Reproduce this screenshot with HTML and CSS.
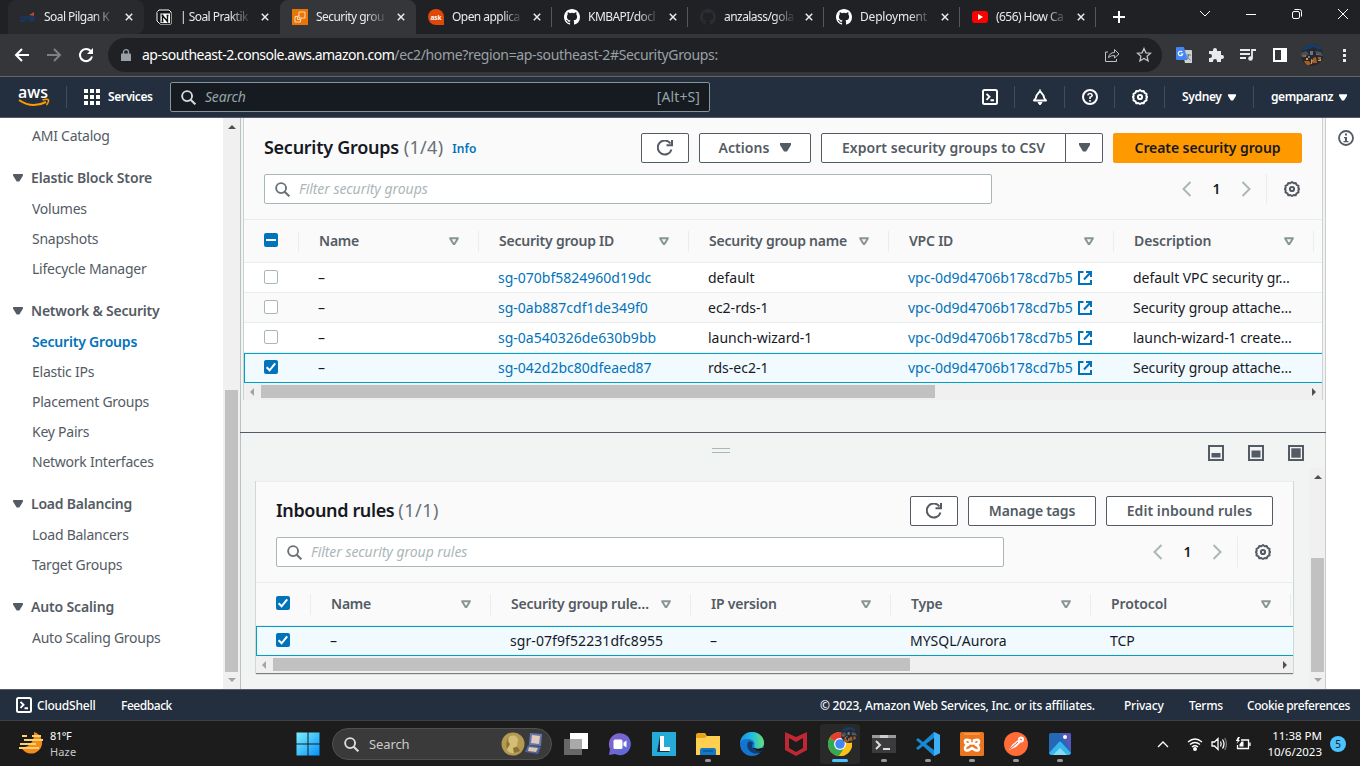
FILE: index.html
```html
<!DOCTYPE html>
<html lang="en">
<head>
<meta charset="utf-8">
<title>Security groups | EC2</title>
<link rel="stylesheet" href="styles.css">
</head>
<body>
<svg class="sprite" aria-hidden="true">
  <symbol id="close" viewBox="0 0 10 10"><path d="M1 1l8 8M9 1l-8 8" stroke="#e8eaed" stroke-width="1.9" fill="none"/></symbol>
  <symbol id="github" viewBox="0 0 16 16"><path d="M8 0C3.58 0 0 3.58 0 8c0 3.54 2.29 6.53 5.47 7.59.4.07.55-.17.55-.38v-1.49c-2.01.37-2.53-.49-2.69-.94-.09-.23-.48-.94-.82-1.13-.28-.15-.68-.52-.01-.53.63-.01 1.08.58 1.23.82.72 1.21 1.87.87 2.33.66.07-.52.28-.87.51-1.07-1.78-.2-3.64-.89-3.64-3.95 0-.87.31-1.59.82-2.15-.08-.2-.36-1.02.08-2.12 0 0 .67-.21 2.2.82a7.6 7.6 0 0 1 4 0c1.53-1.04 2.2-.82 2.2-.82.44 1.1.16 1.92.08 2.12.51.56.82 1.27.82 2.15 0 3.07-1.87 3.75-3.65 3.95.29.25.54.73.54 1.48v2.2c0 .21.15.46.55.38A8 8 0 0 0 16 8c0-4.42-3.58-8-8-8z" fill="currentColor"/></symbol>
  <symbol id="shell" viewBox="0 0 16 16"><rect x="1" y="1" width="14" height="14" rx="1.5" fill="none" stroke="currentColor" stroke-width="2"/><path d="M4.500 4.800l3 3-3 3M8.500 11.300h3.500" fill="none" stroke="currentColor" stroke-width="1.900"/></symbol>
  <symbol id="gear" viewBox="0 0 16 16"><path d="M8 1l1.700 1.200 2-.2.900 1.900 1.900.9-.2 2L15.200 8l-.9 1.400.2 2-1.900.9-.9 1.900-2-.2L8 15l-1.700-1-2 .2-.9-1.900-1.900-.9.2-2L.8 8l.9-1.200-.2-2 1.900-.9.9-1.900 2 .2z" fill="none" stroke="currentColor" stroke-width="2" stroke-linejoin="round"/><circle cx="8" cy="8" r="2.100" fill="none" stroke="currentColor" stroke-width="2"/></symbol>
  <symbol id="search" viewBox="0 0 16 16"><circle cx="6.500" cy="6.500" r="5.300" fill="none" stroke="currentColor" stroke-width="2"/><path d="M10.300 10.300l5 5" stroke="currentColor" stroke-width="2.200"/></symbol>
  <symbol id="down" viewBox="0 0 11 9"><path d="M0 0h11v2L7 8.500H4L0 2z" fill="currentColor"/></symbol>
  <symbol id="sort" viewBox="0 0 10 9"><path d="M1.300 1.200h7.400v.6L5.400 7h-.8L1.300 1.800z" fill="none" stroke="currentColor" stroke-width="2"/></symbol>
  <symbol id="refresh" viewBox="0 0 16 16"><path d="M14.500 9.500A7 7 0 1 1 13.500 3.500" fill="none" stroke="currentColor" stroke-width="2"/><path d="M9.500 5.200H15V0" fill="none" stroke="currentColor" stroke-width="2"/></symbol>
  <symbol id="external" viewBox="0 0 14 14"><path d="M5.500 1H1v12h12V9M8 1h5v5M13 1L6 8.500" fill="none" stroke="currentColor" stroke-width="2"/></symbol>
  <symbol id="left" viewBox="0 0 10 16"><path d="M8.500 1L1.500 8l7 7" fill="none" stroke="currentColor" stroke-width="2"/></symbol>
  <symbol id="right" viewBox="0 0 10 16"><path d="M1.500 1l7 7-7 7" fill="none" stroke="currentColor" stroke-width="2"/></symbol>
  <symbol id="check" viewBox="0 0 14 14"><path d="M2.600 7.200l3 3.100 5.600-7" fill="none" stroke="#fff" stroke-width="2"/></symbol>
  <symbol id="photo" viewBox="0 0 22 22"><clipPath id="round"><circle cx="11" cy="11" r="11"/></clipPath><g clip-path="url(#round)"><path d="M0 0h22v22H0z" fill="#26282d"/><path d="M0 0h22v5l-5 1-4-3-5 2-8 2z" fill="#173d66"/><path d="M0 9l5-2 3 3-4 3H0z" fill="#4b4f55"/><path d="M14 7l6 1 2 4-6-1z" fill="#47566a"/><path d="M2 11h3v2H2zM15 10h3v1h-3zM17 13h3v2h-3z" fill="#916641"/><path d="M3 17h5l2 3-4 2zM12 14l3-1 1 6h-4z" fill="#a75d24"/><path d="M9 7h3v4H9zM7 12h2v2H7z" fill="#687788"/><path d="M10 15l2 1-1 4h-1zM17 16l3-1v2h-3zM5 14h2v2H5z" fill="#d29650"/></g></symbol>
</svg>

<header class="tabs">
  <div class="tab hovered"><svg class="fav" viewBox="0 0 16 16"><path d="M1 8h3v4H1V8m3 0v5M6 12V8h3v4m1-2h4V8h-3v4h3" fill="none" stroke="#193a66" stroke-width="1.300"/><path d="M9 6l5-3v4z" fill="#b34b32"/></svg><span>Soal Pilgan K</span><svg class="x"><use href="#close"/></svg></div>
  <div class="tab"><svg class="fav" viewBox="0 0 16 16"><path d="M1 3l2-2h10l2 2v12H4l-3-3z" fill="#111" stroke="#fff"/><path d="M4 4h10.500v10.500H4zM1 3l3 1" fill="#fff" stroke="#222"/><path d="M6.500 12.500V6.500l5 6V6.500M5.500 6.500h2m3 0h2M5.500 12.500h2" fill="none" stroke="#111" stroke-width="1.400"/></svg><span>| Soal Praktik</span><svg class="x"><use href="#close"/></svg></div>
  <div class="tab active"><svg class="fav" viewBox="0 0 16 16"><path d="M0 0h16v16H0z" fill="#e87508"/><path d="M7 3h6v6H7zM9 9v1.500H5.500V7H7M5 7.500H3V13h5.500v-2" fill="none" stroke="#ffd9ae"/></svg><span>Security grou</span><svg class="x"><use href="#close"/></svg></div>
  <div class="tab sep"><svg class="fav" viewBox="0 0 16 16"><path d="M8 0a8 8 0 0 1 8 8v8H8A8 8 0 0 1 8 0" fill="#df4807"/><text x="8" y="10.500" text-anchor="middle" class="ask">ask</text></svg><span>Open applica</span><svg class="x"><use href="#close"/></svg></div>
  <div class="tab sep"><svg class="fav white"><use href="#github"/></svg><span>KMBAPI/docl</span><svg class="x"><use href="#close"/></svg></div>
  <div class="tab sep"><svg class="fav dim"><use href="#github"/></svg><span>anzalass/gola</span><svg class="x"><use href="#close"/></svg></div>
  <div class="tab sep"><svg class="fav white"><use href="#github"/></svg><span class="deploy">Deployment</span><svg class="x"><use href="#close"/></svg></div>
  <div class="tab sep"><svg class="fav" viewBox="0 0 16 16"><rect y="2" width="16" height="12" rx="3" fill="#f00"/><path d="M6 5l5 3-5 3z" fill="#fff"/></svg><span>(656) How Ca</span><svg class="x"><use href="#close"/></svg></div>
  <svg class="plus" viewBox="0 0 12 12"><path d="M6 0v12M0 6h12" stroke="#fff" stroke-width="2"/></svg>
  <div class="window-controls">
    <svg viewBox="0 0 12 12"><path d="M1 3l5 5 5-5" /></svg>
    <svg viewBox="0 0 12 12"><path d="M1 6.500h10"/></svg>
    <svg viewBox="0 0 12 12"><rect x="1.500" y="3.500" width="7" height="7" rx="1.500"/><path d="M3.500 1.500h5a2 2 0 0 1 2 2v5"/></svg>
    <svg viewBox="0 0 12 12"><path d="M1 1l10 10M11 1L1 11"/></svg>
  </div>
</header>

<div class="toolbar">
  <svg class="nav" viewBox="0 0 16 16"><path d="M15 8H2M8 2L2 8l6 6" stroke="#fff"/></svg>
  <svg class="nav" viewBox="0 0 16 16"><path d="M1 8h13M8 2l6 6-6 6" stroke="#7e8083"/></svg>
  <svg class="nav" viewBox="0 0 16 16"><path d="M14 9.500A6.100 6.100 0 1 1 12.700 4" stroke="#fff"/><path d="M15 1v6H9z" fill="#fff"/></svg>
  <div class="omnibox">
    <svg class="lock" viewBox="0 0 10 12"><path d="M1 4.500h8a1 1 0 0 1 1 1V12H0V5.500a1 1 0 0 1 1-1" fill="#9aa0a6"/><path d="M2.500 5V3a2.500 2.300 0 0 1 5 0v2" fill="none" stroke="#9aa0a6" stroke-width="1.300"/></svg>
    <span class="url"><b>ap-southeast-2.console.aws.amazon.com</b><i>/ec2/home?region=ap-southeast-2#SecurityGroups:</i></span>
    <svg class="line-icon" viewBox="0 0 16 16"><path d="M4 5H1.500v9.500h11V12M4.500 10.500Q5.500 5.500 10.500 5.500V2.500L15 7l-4.500 4V8.500Q7 8.300 4.500 10.500z"/></svg>
    <svg class="line-icon star" viewBox="0 0 16 16"><path d="M8 1.500l1.900 4.300 4.700.4-3.500 3.100 1 4.600L8 11.500l-4.100 2.400 1-4.600L1.400 6.200l4.700-.4z"/></svg>
  </div>
  <div class="extensions">
    <svg viewBox="0 0 16 16"><path d="M6 3h9a1 1 0 0 1 1 1v12H9z" fill="#d0d0d0"/><path d="M10 8h5m-2.500-1v1q0 3-2.500 5m.5-4q2 3 4 4" fill="none" stroke="#667d91"/><path d="M1 0h7l3.500 13H1a1 1 0 0 1-1-1V1a1 1 0 0 1 1-1" fill="#4285f4"/><path d="M6.200 5A2.200 2.200 0 1 0 6.700 7H4.700" fill="none" stroke="#fff" stroke-width="1.200"/></svg>
    <svg viewBox="0 0 16 16"><path d="M1 4h4V3a2 2 0 1 1 4 0v1h4v4h1a2 2 0 1 1 0 4h-1v3H9v-1a2 2 0 0 0-4 0v1H1v-4h1a2 2 0 0 0 0-4H1z" fill="#e8eaed"/></svg>
    <svg viewBox="0 0 16 16"><path d="M0 3h10M0 7h10M0 11h6M12 2v9M12 3h4" stroke="#e8eaed" stroke-width="1.800"/><circle cx="10.500" cy="11.500" r="2.300" fill="#e8eaed"/></svg>
    <svg viewBox="0 0 16 16"><path d="M1 1h14v14H1zM3 3v10h6V3z" fill="#fff" fill-rule="evenodd"/></svg>
    <svg class="avatar"><use href="#photo"/></svg>
    <svg viewBox="0 0 16 16"><path d="M7 2h3v3H7zM7 7h3v3H7zM7 12h3v3H7z" fill="#e8eaed"/></svg>
  </div>
</div>

<nav class="aws">
  <svg class="logo" viewBox="0 0 32 22"><text x="0" y="11.500" textLength="30" lengthAdjust="spacingAndGlyphs">aws</text><path d="M1 14q13 9 27 2" fill="none" stroke="#ff9900" stroke-width="2"/><path d="M24.500 14q5-1.500 6 0 .5 2-2 5" fill="none" stroke="#ff9900" stroke-width="1.500"/></svg>
  <i class="rule first"></i>
  <svg class="grid-icon" viewBox="0 0 16 16"><path d="M0 0h4v4H0zM6 0h4v4H6zM12 0h4v4h-4zM0 6h4v4H0zM6 6h4v4H6zM12 6h4v4h-4zM0 12h4v4H0zM6 12h4v4H6zM12 12h4v4h-4z" fill="#fff"/></svg>
  <b class="services">Services</b>
  <div class="aws-search"><svg><use href="#search"/></svg><em>Search</em><span>[Alt+S]</span></div>
  <div class="aws-tools">
    <div><svg><use href="#shell"/></svg></div>
    <div><svg viewBox="0 0 16 16"><path d="M2 11.500Q4.500 9 4.500 6.500L8 2l3.500 4.500Q11.500 9 14 11.500z" fill="none" stroke="#fff" stroke-width="2" stroke-linejoin="round"/><path d="M8 0v3M6 13.500h4L8 16z" stroke="#fff" fill="#fff"/></svg></div>
    <div><svg viewBox="0 0 16 16"><circle cx="8" cy="8" r="7" fill="none" stroke="#fff" stroke-width="2"/><path d="M5.800 6.300Q6 4.500 8 4.500t2.200 1.800Q10.200 7.500 8 8.300V10M8 11v1.700" fill="none" stroke="#fff" stroke-width="1.600"/></svg></div>
    <div><svg><use href="#gear"/></svg></div>
    <b class="region">Sydney <svg><use href="#down"/></svg></b>
    <b class="user">gemparanz <svg><use href="#down"/></svg></b>
  </div>
</nav>

<main class="console">
  <aside class="side">
    <a>AMI Catalog</a>
    <h3><svg><use href="#down"/></svg>Elastic Block Store</h3>
    <a>Volumes</a><a>Snapshots</a><a>Lifecycle Manager</a>
    <h3><svg><use href="#down"/></svg>Network &amp; Security</h3>
    <a class="current">Security Groups</a><a>Elastic IPs</a><a>Placement Groups</a><a>Key Pairs</a><a>Network Interfaces</a>
    <h3><svg><use href="#down"/></svg>Load Balancing</h3>
    <a>Load Balancers</a><a>Target Groups</a>
    <h3><svg><use href="#down"/></svg>Auto Scaling</h3>
    <a>Auto Scaling Groups</a>
  </aside>
  <div class="vbar side-bar"><i class="up"></i><span></span><i class="dn"></i></div>

  <section class="content">
    <div class="upper">
      <div class="card groups">
        <div class="title-row">
          <h1>Security Groups</h1><span class="count">(1/4)</span><b class="info">Info</b>
          <div class="buttons">
            <button class="btn icon"><svg><use href="#refresh"/></svg></button>
            <button class="btn actions">Actions <svg><use href="#down"/></svg></button>
            <div class="split"><button class="btn export">Export security groups to CSV</button><button class="btn more"><svg><use href="#down"/></svg></button></div>
            <button class="btn primary">Create security group</button>
          </div>
        </div>
        <div class="filter-row">
          <div class="filter"><svg><use href="#search"/></svg><em>Filter security groups</em></div>
          <div class="pager"><svg><use href="#left"/></svg><b>1</b><svg><use href="#right"/></svg><svg class="settings"><use href="#gear"/></svg></div>
        </div>
        <div class="row head">
          <div><i class="box on"><u></u></i></div><div>Name<svg><use href="#sort"/></svg></div><div>Security group ID<svg><use href="#sort"/></svg></div><div>Security group name<svg><use href="#sort"/></svg></div><div>VPC ID<svg><use href="#sort"/></svg></div><div>Description<svg><use href="#sort"/></svg></div><div></div>
        </div>
        <div class="row"><div><i class="box"></i></div><div>–</div><div class="link">sg-070bf5824960d19dc</div><div>default</div><div class="link">vpc-0d9d4706b178cd7b5<svg><use href="#external"/></svg></div><div>default VPC security gr…</div></div>
        <div class="row alt"><div><i class="box"></i></div><div>–</div><div class="link">sg-0ab887cdf1de349f0</div><div>ec2-rds-1</div><div class="link">vpc-0d9d4706b178cd7b5<svg><use href="#external"/></svg></div><div>Security group attache…</div></div>
        <div class="row"><div><i class="box"></i></div><div>–</div><div class="link">sg-0a540326de630b9bb</div><div>launch-wizard-1</div><div class="link">vpc-0d9d4706b178cd7b5<svg><use href="#external"/></svg></div><div>launch-wizard-1 create…</div></div>
        <div class="row selected"><div><i class="box on"><svg><use href="#check"/></svg></i></div><div>–</div><div class="link">sg-042d2bc80dfeaed87</div><div>rds-ec2-1</div><div class="link">vpc-0d9d4706b178cd7b5<svg><use href="#external"/></svg></div><div>Security group attache…</div></div>
        <div class="hbar"><i class="lt"></i><span></span><i class="rt"></i></div>
      </div>
    </div>
    <div class="lower">
      <div class="splitter">
        <i class="handle"></i>
        <div class="sizes">
          <svg viewBox="0 0 16 16"><path d="M1 1h14v14H1z"/><path class="fill" d="M3.500 8h9v4.500h-9z"/></svg>
          <svg viewBox="0 0 16 16"><path d="M1 1h14v14H1z"/><path class="fill" d="M3.500 5.500h9v7h-9z"/></svg>
          <svg viewBox="0 0 16 16"><path d="M1 1h14v14H1z"/><path class="fill" d="M3.300 3.300h9.400v9.400H3.300z"/></svg>
        </div>
      </div>
      <div class="lower-body">
        <div class="card rules">
          <div class="title-row">
            <h1>Inbound rules</h1><span class="count">(1/1)</span>
            <div class="buttons">
              <button class="btn icon"><svg><use href="#refresh"/></svg></button>
              <button class="btn tags">Manage tags</button>
              <button class="btn edit">Edit inbound rules</button>
            </div>
          </div>
          <div class="filter-row">
            <div class="filter"><svg><use href="#search"/></svg><em>Filter security group rules</em></div>
            <div class="pager"><svg><use href="#left"/></svg><b>1</b><svg><use href="#right"/></svg><svg class="settings"><use href="#gear"/></svg></div>
          </div>
          <div class="row head">
            <div><i class="box on"><svg><use href="#check"/></svg></i></div><div>Name<svg><use href="#sort"/></svg></div><div>Security group rule…<svg><use href="#sort"/></svg></div><div>IP version<svg><use href="#sort"/></svg></div><div>Type<svg><use href="#sort"/></svg></div><div>Protocol<svg><use href="#sort"/></svg></div><div></div>
          </div>
          <div class="row selected"><div><i class="box on"><svg><use href="#check"/></svg></i></div><div>–</div><div class="rule-id">sgr-07f9f52231dfc8955</div><div>–</div><div>MYSQL/Aurora</div><div>TCP</div></div>
          <div class="hbar"><i class="lt"></i><span></span><i class="rt"></i></div>
        </div>
        <div class="vbar rules-bar"><i class="up"></i><span></span><i class="dn"></i></div>
      </div>
    </div>
  </section>
  <aside class="help"><svg viewBox="0 0 16 16"><circle cx="8" cy="8" r="7" fill="none" stroke="#545b64" stroke-width="1.800"/><path d="M7 3.500h2v2H7zM6 7h3v4h1.500v1.300h-5V11H7V8.300H6z" fill="#545b64"/></svg></aside>
</main>

<footer class="aws-footer">
  <svg><use href="#shell"/></svg><span class="f1">CloudShell</span><span class="f2">Feedback</span>
  <span class="f3">© 2023, Amazon Web Services, Inc. or its affiliates.</span><span class="f4">Privacy</span><span class="f5">Terms</span><span class="f6">Cookie preferences</span>
</footer>

<div class="taskbar">
  <div class="weather">
    <svg viewBox="0 0 24 24"><path d="M15 1a11 11 0 1 1-13 15c8 1 14-6 13-15" fill="#f28c1e"/><path d="M3 5h5M13 5h9M5 9h19M1 13h16M0 17h20" stroke="#fbd36a" stroke-width="1.800"/></svg>
    <p><b>81°F</b><span>Haze</span></p>
  </div>
  <div class="apps">
    <div class="app"><svg viewBox="0 0 24 24"><defs><linearGradient id="win" x2="1" y2="1"><stop stop-color="#7cf0ff"/><stop offset="1" stop-color="#0592fb"/></linearGradient></defs><path d="M.5.500h11v11H.5zM12.500.500h11v11h-11zM.5 12.500h11v11H.5zM12.500 12.500h11v11h-11z" fill="url(#win)"/></svg></div>
    <div class="win-search"><svg class="glass"><use href="#search"/></svg><span>Search</span>
      <svg class="doodle" viewBox="0 0 42 24"><circle cx="12" cy="12" r="11.500" fill="#b49a51"/><path d="M9 4q7-2 8 4l-1 6-4 2 2 5q-8 1-8-5l3-4q-3-5 0-8" fill="#d3bd78"/><path d="M8 5q-3 5 1 7l-3 5q-2-8 2-12M16 15q2 1 3 4l-6 2-1-5" fill="#8b712f"/><path d="M29 1l12 1-1 12-12-1z" fill="#6278ae"/><path d="M31 3l8 1-1 8-8-1z" fill="#e2c9bd"/><path d="M27 13l13 2-3 7-13-2z" fill="#4e64a0"/><path d="M28 15l9 1-2 4-8-1z" fill="#dfc7a9"/></svg></div>
    <div class="app"><svg viewBox="0 0 24 24"><path d="M6 1h18v16H6z" fill="#fff"/><path d="M0 7h18v16H0z" fill="#686868"/><path d="M6 7h12v10H6z" fill="#aaa"/></svg></div>
    <div class="app"><svg viewBox="0 0 24 24"><defs><linearGradient id="meet" x2="1" y2="1"><stop stop-color="#8d62c9"/><stop offset="1" stop-color="#546bdd"/></linearGradient></defs><path d="M1 23l1-6A11 11 0 1 1 7 22z" fill="url(#meet)"/><rect x="5.500" y="7.500" width="9" height="9.500" rx="1.500" fill="#fff"/><path d="M15.500 10.500l3-2v7l-3-2z" fill="#fff"/></svg></div>
    <div class="app"><svg viewBox="0 0 24 24"><path d="M0 0h24v24H0z" fill="#25abd8"/><path d="M8 4L5 20h13l-7-5z" fill="#142d4e"/><path d="M8 4h4v11h6v4H8z" fill="#fff"/></svg></div>
    <div class="app open"><svg viewBox="0 0 24 24"><path d="M0 3q0-2 2-2h7l2 3h13v18H0z" fill="#e8a317"/><path d="M0 6h9l2-2h13v19H0z" fill="#ffd04f"/><path d="M4 23v-5q0-2 2-2h12q2 0 2 2v5z" fill="#1479c5"/><path d="M7 19h10" stroke="#075a9d" stroke-width="1.500"/></svg></div>
    <div class="app"><svg viewBox="0 0 24 24"><defs><linearGradient id="edge" x2="1"><stop stop-color="#168fe3"/><stop offset=".5" stop-color="#20bde0"/><stop offset="1" stop-color="#68df72"/></linearGradient></defs><circle cx="12" cy="12" r="12" fill="#1375cb"/><path d="M12 16h12v3l-3 3z" fill="#1c1c1c"/><path d="M0 11C1 3 7 0 12 0c8 0 12 6 12 11 0 7-10 7-10 3 2-3-1-7-6-7Q2 7 0 11" fill="url(#edge)"/><path d="M8 10c-3 8 4 13 11 11q3-1 4-3-3 2-6 1c-5-1-6-5-4-8q-3-3-5-1" fill="#103d73"/></svg></div>
    <div class="app"><svg viewBox="0 0 24 24"><path d="M1 0l11 5 11-5v18l-11 6-11-6zM5 6v10l7 4 7-4V6l-7 4z" fill="#bf2833" fill-rule="evenodd"/></svg></div>
    <div class="app focused"><svg viewBox="0 0 24 24"><circle cx="12" cy="12" r="12" fill="#fbc116"/><path d="M12 12H24A12 12 0 0 0 1.600 6z" fill="#e43e30"/><path d="M12 12L1.600 6A12 12 0 0 0 11 24l6-9z" fill="#34a853"/><path d="M12 12v-5h11A12 12 0 0 1 11 24l6-9z" fill="#fbc116"/><circle cx="12" cy="12" r="6" fill="#fff"/><circle cx="12" cy="12" r="4.800" fill="#4285f4"/></svg><svg class="mini" viewBox="0 0 22 22"><use href="#photo" width="22" height="22"/></svg></div>
    <div class="app open"><svg viewBox="0 0 24 24"><rect y="3" width="24" height="18" rx="1" fill="#3b3b3d"/><path d="M0 3h24v3H0z" fill="#9b9b9b"/><path d="M8 3h8v3H8z" fill="#ccc"/><path d="M4 9l4 4-4 4M11 17h7" stroke="#ddd" stroke-width="2" fill="none"/></svg></div>
    <div class="app open"><svg viewBox="0 0 24 24"><path d="M18 0l6 3v18l-6 3L7 14l-5 4-2-2 5-4-5-4 2-2 5 4z" fill="#168ad4"/><path d="M18 6v12l-8-6z" fill="#1c1c1c"/><path d="M18 0l6 3v18l-6 3z" fill="#3bb0f4"/></svg></div>
    <div class="app open"><svg viewBox="0 0 24 24"><rect width="24" height="24" rx="1.500" fill="#ea7621"/><path d="M4 2h16" stroke="#ffb15f"/><path d="M10 8.500q-5-2-5 1t4 3q-4 1-4 4t4 1.500l3-2 3 2q4 1.500 4-1.500t-4-4q4 0 4-3t-5-1v3h-4z" fill="none" stroke="#fff" stroke-width="2.600"/></svg></div>
    <div class="app open"><svg viewBox="0 0 24 24"><circle cx="12" cy="12" r="12" fill="#ff6c37"/><path d="M5 18l3-5 6-5 3 2-5 5z" fill="#fff"/><circle cx="17" cy="7.500" r="3" fill="#fff"/><path d="M6 17l8-7M16 7l2 1" stroke="#df5a2d"/></svg></div>
    <div class="app open"><svg viewBox="0 0 24 24"><rect x="1" y="1" width="22" height="22" rx="2" fill="#2568b7"/><path d="M12 1h9q2 0 2 2v16z" fill="#5458bb"/><path d="M1 21L11 10q1-1 2 0l10 11-2 2H3z" fill="#35b7eb"/><path d="M5 23l7-7 7 7z" fill="#83dcf5"/><circle cx="17" cy="5" r="2" fill="#fff"/></svg></div>
  </div>
  <div class="tray">
    <svg class="chev" viewBox="0 0 12 12"><path d="M1 9l5-5 5 5"/></svg>
    <svg viewBox="0 0 16 16"><path d="M1 6q7-6 14 0M3 8.500q5-4 10 0M5 11q3-2.500 6 0"/><circle cx="8" cy="13" r="1.300" fill="#fff"/></svg>
    <svg class="speaker" viewBox="0 0 16 16"><path d="M1 6h2.500L7 2.500v11L3.500 10H1zM9.500 5.500q1.500 2.500 0 5M11.500 3.500q3 4.500 0 9"/><path d="M13.700 2q3.500 6 0 12" opacity=".4"/></svg>
    <svg class="battery" viewBox="0 0 16 16"><path d="M6 4h7.500v8.500h-11V9M15 6.500v3.500"/><path d="M3 1L.8 5h2L1.500 8 5 4H3.500L5 1z" fill="#fff" stroke="none"/><path d="M4.500 10.500v-2l2-3h2v5z" fill="#fff" stroke="none"/></svg>
    <p class="clock">11:38 PM<br>10/6/2023</p>
    <b class="badge">5</b>
  </div>
</div>
</body>
</html>
```
FILE: styles.css
```css
* { box-sizing: border-box; }
body { margin: 0; width: 1360px; height: 766px; overflow: hidden; display: flex; flex-direction: column; font: 14px/20px "Noto Sans", sans-serif; color: #16191f; background: #fff; }
svg { display: block; flex: none; width: 16px; height: 16px; }
i, u { display: block; font-style: normal; }
p { margin: 0; }
.sprite { position: absolute; width: 0; height: 0; }

/* Browser tabs */
.tabs { flex: none; height: 34px; padding-left: 8px; display: flex; align-items: center; background: #202124; color: #e8eaed; font: 12px/34px "Noto Sans", sans-serif; }
.tab { width: 136px; height: 34px; padding-left: 12px; display: flex; align-items: center; position: relative; }
.tab span { width: 73px; margin-left: 8px; white-space: nowrap; letter-spacing: -.55px; -webkit-mask-image: linear-gradient(90deg, #000 68%, transparent 98%); mask-image: linear-gradient(90deg, #000 68%, transparent 98%); }
.tab .deploy { letter-spacing: -.2px; }
.tab .x { width: 8px; height: 8px; margin-left: 8px; }
.hovered { background: #292a2d; border-radius: 8px 8px 8px 0; }
.active { background: #35363a; border-radius: 8px 8px 0 0; }
.sep::after { content: ""; position: absolute; right: 0; top: 7px; width: 1px; height: 20px; background: #55575b; }
.white { color: #fff; }
.dim { color: #292e33; }
.ask { font: bold 6.5px "Open Sans", sans-serif; fill: #fff; }
.plus { width: 12px; height: 12px; margin-left: 17px; }
.window-controls { display: flex; gap: 34px; margin: 0 11px 6px auto; }
.window-controls svg { width: 12px; height: 12px; fill: none; stroke: #fff; }

/* Browser toolbar */
.toolbar { flex: none; height: 43px; padding-left: 14px; display: flex; align-items: center; background: #35363a; border-bottom: 1px solid #63656b; }
.nav { margin-right: 16px; fill: none; stroke-width: 2; }
.omnibox { width: 1054px; height: 34px; margin-left: -2px; padding: 0 10px 0 13px; display: flex; align-items: center; border-radius: 17px; background: #202124; }
.lock { width: 10px; height: 12px; }
.url { margin-left: 11px; white-space: nowrap; color: #fff; }
.url b { font-weight: 400; letter-spacing: -.49px; }
.url i { display: inline; color: #9aa0a6; letter-spacing: -.35px; }
.line-icon { fill: none; stroke: #bec1c5; margin-left: auto; }
.line-icon.star { margin-left: 16px; stroke-width: 1.3; }
.extensions { display: flex; align-items: center; gap: 16px; margin-left: 14px; }
.extensions .avatar { width: 22px; height: 22px; margin: 0 -3px; }

/* Console navigation */
.aws { flex: none; height: 41px; padding-left: 18px; display: flex; align-items: center; background: #232f3e; border-bottom: 1px solid #545b64; color: #fff; font-size: 12px; }
.aws b { font-weight: 600; }
.logo { width: 32px; height: 22px; }
.logo text { font: 600 16px "Open Sans", sans-serif; fill: #fff; }
.rule { width: 1px; height: 22px; background: #414c59; }
.rule.first { margin: 0 17px 0 16px; }
.services { width: 62px; margin-left: 8px; letter-spacing: -.4px; }
.aws-search { width: 540px; height: 30px; padding: 0 9px 0 10px; display: flex; align-items: center; background: #161a21; border: 1px solid #879596; border-radius: 2px; font-size: 14px; color: #95a5a6; }
.aws-search svg { width: 15px; height: 15px; color: #d5dbdb; }
.aws-search em { margin-left: 9px; letter-spacing: -.2px; }
.aws-search span { margin-left: auto; letter-spacing: .1px; }
.aws-tools { display: flex; align-items: center; margin-left: 255px; height: 22px; }
.aws-tools div { width: 50px; height: 22px; display: flex; justify-content: center; align-items: center; border-right: 1px solid #414c59; }
.aws-tools b { display: flex; align-items: center; white-space: nowrap; height: 22px; }
.aws-tools b svg { width: 8px; height: 7px; }
.region { width: 89px; padding-left: 17px; gap: 6px; border-right: 1px solid #414c59; letter-spacing: -.35px; }
.user { padding-left: 17px; gap: 6px; letter-spacing: -.45px; }

/* Workspace */
.console { flex: none; height: 571px; display: flex; overflow: hidden; }
.side { width: 223px; padding-top: 3px; color: #545b64; }
.side a { display: block; height: 30px; line-height: 30px; padding-left: 32px; letter-spacing: -.25px; }
.side .current { color: #0073bb; font-weight: 600; letter-spacing: -.2px; }
.side h3 { margin: 0; height: 43px; padding: 11px 0 0 13px; display: flex; align-items: center; font-size: 14px; font-weight: 600; letter-spacing: -.15px; }
.side h3:nth-of-type(2), .side h3:nth-of-type(3) { letter-spacing: -.22px; }
.side h3 svg { width: 10px; height: 8px; margin-right: 8px; }
.vbar { width: 17px; background: #f0f0f0; display: flex; flex-direction: column; align-items: center; }
.vbar span { width: 13px; background: #c1c1c1; }
.up, .dn { border: 4px solid transparent; width: 8px; height: 4px; }
.up { border-top: 0; border-bottom-color: #505050; }
.dn { border-bottom: 0; border-top-color: #a3a3a3; }
.side-bar { padding-top: 7px; }
.side-bar span { height: 282px; margin: 261px 0 6px; }
.content { width: 1086px; border: 1px solid #ccc; border-width: 0 1px; border-left-color: #b9c2c2; background: #f2f3f3; }
.upper { height: 314px; padding: 0 2px; }
.card { background: #fafafa; }
.groups { border: 1px solid #ccd1d1; border-width: 0 1px; height: 282px; overflow: hidden; }
.title-row { display: flex; align-items: center; padding: 15px 20px 0; height: 45px; }
h1 { margin: 0 0 2px; font-size: 18px; font-weight: 600; line-height: 30px; letter-spacing: -.28px; }
.count { margin: 0 0 2px 5px; font-size: 18px; color: #687078; letter-spacing: .3px; }
.info { margin: 2px 0 0 9px; font-size: 12px; font-weight: 600; color: #0073bb; }
.buttons { display: flex; gap: 10px; margin-left: auto; }
.btn { height: 30px; padding: 0 0 1px; display: flex; justify-content: center; align-items: center; border: 1px solid #545b64; border-radius: 2px; background: #fff; color: #545b64; font: 600 14px "Noto Sans", sans-serif; white-space: nowrap; letter-spacing: .06px; }
.btn.icon { width: 48px; padding: 0; }
.actions { width: 112px; gap: 11px; }
.btn svg { width: 11px; height: 9px; }
.btn.icon svg { width: 16px; height: 16px; }
.split { display: flex; }
.export { width: 245px; border-radius: 2px 0 0 2px; }
.more { width: 38px; margin-left: -1px; border-radius: 0 2px 2px 0; }
.primary { width: 189px; background: #f90; border-color: #f90; color: #16191f; letter-spacing: -.08px; }
.tags { width: 128px; letter-spacing: -.2px; }
.edit { width: 167px; letter-spacing: .06px; }
.filter-row { display: flex; padding: 11px 20px 0; height: 57px; border-bottom: 1px solid #eaeded; }
.filter { width: 728px; height: 30px; padding-left: 10px; display: flex; align-items: center; background: #fff; border: 1px solid #aab7b8; border-radius: 2px; color: #aab7b8; }
.filter svg { width: 15px; height: 15px; margin-right: 9px; color: #687078; }
.filter em { letter-spacing: -.05px; }
.pager { display: flex; align-items: center; height: 30px; margin-left: auto; color: #aab7b8; }
.pager > svg { width: 10px; height: 16px; }
.pager b { width: 49px; text-align: center; color: #16191f; font-weight: 600; }
.pager .settings { box-sizing: content-box; width: 16px; height: 16px; padding: 7px 2px 7px 17px; margin-left: 15px; border-left: 1px solid #eaeded; color: #545b64; }
.row { width: 1270px; height: 30px; display: grid; grid-template-columns: 55px 180px 210px 200px 225px 200px 200px; align-items: center; background: #fff; border-bottom: 1px solid #eaeded; white-space: nowrap; }
.row > div { padding-left: 19px; display: flex; align-items: center; }
.row > div:first-child { padding-left: 20px; }
.row > div:nth-child(6) { letter-spacing: -.05px; }
.head { height: 43px; background: #fafafa; font-weight: 600; color: #545b64; letter-spacing: -.22px; }
.row.head > div:nth-child(6) { letter-spacing: -.1px; }
.head > div { height: 21px; padding: 0 20px; border-right: 1px solid #eaeded; }
.head > div svg { width: 10px; height: 9px; margin-left: auto; color: #879596; }
.head > div > svg { margin-right: -1px; }
.alt { background: #fafafa; }
.link { color: #0073bb; }
.link svg { width: 14px; height: 14px; margin-left: 5px; }
.rule-id { letter-spacing: .08px; }
.selected { width: auto; background: #f1faff; border: 1px solid #00a1c9; border-right: 0; overflow: hidden; }
.selected > div:first-child { margin-left: -1px; }
.selected > div:not(:first-child) { position: relative; left: -1px; }
.box { width: 14px; height: 14px; border: 1px solid #aab7b8; border-radius: 2px; background: #fff; margin-bottom: 2px; }
.box.on { border: 0; background: #0073bb; }
.box.on svg { width: 14px; height: 14px; margin: 0; color: #fff; }
.box u { width: 10px; height: 2px; margin: 6px 2px; background: #fff; }
.hbar { height: 17px; background: #f0f0f0; display: flex; align-items: center; padding: 0 6px; }
.hbar span { height: 13px; background: #c1c1c1; margin-left: 7px; }
.lt, .rt { border: 4px solid transparent; width: 4px; height: 8px; }
.lt { border-left: 0; border-right-color: #a3a3a3; }
.rt { border-right: 0; border-left-color: #505050; margin-left: auto; }
.groups .hbar span { width: 674px; }

/* Split panel */
.lower { border-top: 1px solid #545b64; height: 257px; margin: 0 -1px; padding: 0 1px; }
.splitter { height: 35px; position: relative; display: flex; justify-content: flex-end; padding: 12px 21px 0 0; }
.handle { position: absolute; left: 471px; top: 15px; width: 18px; height: 5px; border: solid #aab7b8; border-width: 1px 0; }
.sizes { display: flex; gap: 24px; }
.sizes svg { fill: none; stroke: #545b64; stroke-width: 2; }
.sizes .fill { fill: #545b64; stroke: none; }
.lower-body { height: 221px; display: flex; justify-content: space-between; padding-left: 15px; }
.rules { width: 1037px; height: 192px; margin-top: 13px; overflow: hidden; box-shadow: -1px 0 0 #d1d6d6, 1px 0 0 #d1d6d6, 0 1px 1px #777e80; border-top: 1px solid #eaeded; }
.rules .title-row { height: 44px; padding-top: 14px; }
.rules .count { margin-left: 4px; letter-spacing: .5px; }
.rules h1 { letter-spacing: -.38px; }
.rules .row { grid-template-columns: 55px 180px 200px 200px 200px 200px 200px; }
.rules .hbar span { width: 637px; }
.rules-bar { width: 16px; padding: 7px 0 0 1px; }
.rules-bar span { height: 114px; margin: 79px 0 6px; }
.help { width: 34px; padding: 12px 0 0 12px; }

/* Console footer */
.aws-footer { flex: none; height: 31px; padding-left: 16px; display: flex; align-items: center; background: #232f3e; border-top: 1px solid #545b64; color: #fff; font: 500 12px "Noto Sans", sans-serif; white-space: nowrap; }
.aws-footer span { letter-spacing: -.22px; }
.aws-footer .f1 { width: 84px; margin-left: 5px; }
.aws-footer .f2 { letter-spacing: -.45px; }
.aws-footer .f3 { width: 304px; margin-left: auto; letter-spacing: -.24px; }
.aws-footer .f4 { width: 65px; }
.aws-footer .f5 { width: 58px; }
.aws-footer .f6 { width: 113px; letter-spacing: -.42px; }

/* Taskbar */
.taskbar { flex: none; height: 46px; display: flex; position: relative; background: #1c1c1c; border-top: 1px solid #414141; color: #fff; font-size: 11px; }
.weather { width: 288px; padding: 7px 0 0 19px; display: flex; gap: 7px; line-height: 16px; }
.weather svg { width: 24px; height: 24px; margin-top: 3px; }
.weather b, .weather span { display: block; font-weight: 400; }
.weather b { letter-spacing: -.4px; }
.weather span { color: #c8c8c8; letter-spacing: .15px; }
.apps { display: flex; gap: 4px; padding-top: 3px; }
.app { width: 40px; height: 40px; display: flex; align-items: center; justify-content: center; position: relative; }
.app svg { width: 24px; height: 24px; }
.open::after, .focused::after { content: ""; position: absolute; left: 17px; bottom: 2px; width: 6px; height: 3px; border-radius: 2px; background: #999; }
.focused { background: #292929; border-radius: 4px; }
.focused::after { left: 12px; width: 16px; background: #4cc2ff; }
.app .mini { position: absolute; width: 16px; height: 16px; top: 3px; right: 3px; }
.win-search { width: 220px; height: 32px; margin-top: 4px; padding: 0 8px 0 11px; display: flex; align-items: center; border-radius: 16px; background: #3a3a3a; border: 1px solid #505050; font-size: 13px; color: #ccc; letter-spacing: -.1px; }
.win-search .glass { width: 15px; height: 15px; margin-right: 10px; color: #ddd; }
.doodle { width: 42px; height: 24px; margin-left: auto; }
.tray { margin-left: auto; display: flex; align-items: center; padding-right: 14px; }
.tray svg { fill: none; stroke: #fff; margin-right: 8px; stroke-width: 1.3; }
.tray .chev { width: 12px; height: 12px; margin-right: 18px; }
.tray .battery { margin-right: 7px; }
.clock { width: 64px; line-height: 16px; text-align: right; white-space: nowrap; font-size: 11.5px; }
.badge { width: 16px; height: 16px; margin-left: 8px; border-radius: 50%; background: #4cc2ff; color: #202020; text-align: center; font: 10px/16px "Noto Sans", sans-serif; }
```
